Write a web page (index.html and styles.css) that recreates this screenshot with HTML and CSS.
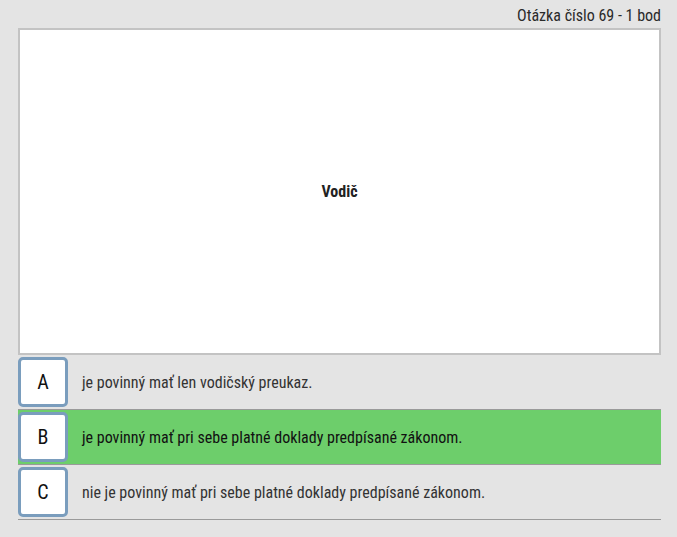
FILE: index.html
```html
<!DOCTYPE html>
<html lang="sk">
<head>
<meta charset="utf-8">
<link rel="stylesheet" href="styles.css">
</head>
<body>
<div class="quiz">
  <div class="head">Otázka číslo 69 - 1 bod</div>
  <div class="picture"><span class="caption">Vodič</span></div>
  <div class="answers">
    <div class="answer"><div class="letter">A</div><div class="text">je povinný mať len vodičský preukaz.</div></div>
    <div class="answer correct"><div class="letter">B</div><div class="text">je povinný mať pri sebe platné doklady predpísané zákonom.</div></div>
    <div class="answer"><div class="letter">C</div><div class="text">nie je povinný mať pri sebe platné doklady predpísané zákonom.</div></div>
  </div>
</div>
</body>
</html>
```
FILE: styles.css
```css
html, body { margin: 0; padding: 0; }
body {
  background: #e4e4e4;
  font-family: Roboto, "Liberation Sans", sans-serif;
  font-stretch: 80%;
  color: #222;
}
.quiz {
  width: 643px;
  margin-left: 18px;
  padding-top: 6px;
}
.head {
  text-align: right;
  font-size: 16px;
  line-height: 20px;
  height: 22px;
  color: #2a2a2a;
}
.picture {
  height: 323px;
  background: #fff;
  border: 2px solid #c3c3c3;
  display: flex;
  align-items: center;
  justify-content: center;
}
.caption {
  font-weight: 700;
  font-size: 16px;
  color: #222;
}
.answers { display: flex; flex-direction: column; }
.answer {
  display: flex;
  align-items: center;
  height: 54px;
  border-bottom: 1px solid #9a9a9a;
}
.answer.correct { background: #6dce6b; }
.letter {
  width: 44px;
  height: 44px;
  border: 3px solid #7a9dbd;
  border-radius: 5px;
  background: #fff;
  display: flex;
  align-items: center;
  justify-content: center;
  font-size: 20px;
  color: #111;
  flex: none;
}
.text {
  margin-left: 14px;
  font-size: 16px;
  color: #333;
}
.correct .text { color: #111; }
```
